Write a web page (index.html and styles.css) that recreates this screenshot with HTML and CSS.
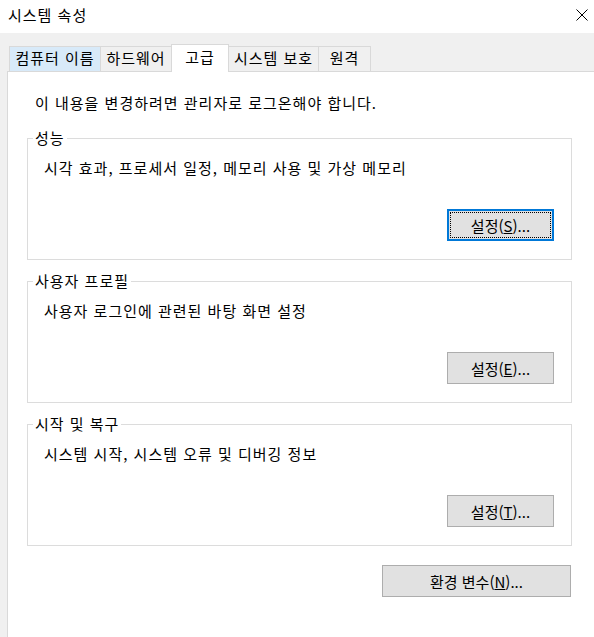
FILE: index.html
```html
<!DOCTYPE html>
<html lang="ko">
<head>
    <meta charset="UTF-8">
    <title>시스템 속성</title>
    <link rel="stylesheet" href="styles.css">
</head>
<body>
<div class="titlebar">
    <span class="title">시스템 속성</span>
    <svg class="close" width="12" height="12" viewBox="0 0 12 12">
        <path d="M0.5 0.5 L11.5 11.5 M11.5 0.5 L0.5 11.5" stroke="#000" stroke-width="1" fill="none"/>
    </svg>
</div>

<div class="tabs">
    <div class="tab tab-hover" style="width: 92px">컴퓨터 이름</div>
    <div class="tab" style="width: 72px">하드웨어</div>
    <div class="tab tab-active" style="width: 58px">고급</div>
    <div class="tab" style="width: 91px">시스템 보호</div>
    <div class="tab" style="width: 53px">원격</div>
</div>

<div class="panel">
    <p class="notice">이 내용을 변경하려면 관리자로 로그온해야 합니다.</p>

    <fieldset class="group">
        <legend>성능</legend>
        <p class="group-text">시각 효과, 프로세서 일정, 메모리 사용 및 가상 메모리</p>
        <button class="btn btn-focus"><span class="focus-ring">설정(<u>S</u>)...</span></button>
    </fieldset>

    <fieldset class="group">
        <legend>사용자 프로필</legend>
        <p class="group-text">사용자 로그인에 관련된 바탕 화면 설정</p>
        <button class="btn">설정(<u>E</u>)...</button>
    </fieldset>

    <fieldset class="group">
        <legend>시작 및 복구</legend>
        <p class="group-text">시스템 시작, 시스템 오류 및 디버깅 정보</p>
        <button class="btn">설정(<u>T</u>)...</button>
    </fieldset>

    <div class="footer">
        <button class="btn btn-wide">환경 변수(<u>N</u>)...</button>
    </div>
</div>
</body>
</html>
```

FILE: styles.css
```css
* {
    box-sizing: border-box;
}

html, body {
    height: 100%;
}

body {
    margin: 0;
    background-color: #f0f0f0;
    font-family: "Noto Sans CJK KR", "Noto Sans", sans-serif;
    font-size: 15px;
    line-height: 20px;
    letter-spacing: 1px;
    color: #000;
    display: flex;
    flex-direction: column;
    overflow: hidden;
}

/* 창 제목 표시줄 */
.titlebar {
    height: 33px;
    background-color: #fff;
    display: flex;
    align-items: center;
    justify-content: space-between;
    padding: 0 6px 0 8px;
}

.title {
    margin-top: -3px;
}

.close {
    margin-top: -3px;
}

/* 탭 */
.tabs {
    display: flex;
    align-items: flex-end;
    margin-top: 11px;
    padding-left: 9px;
    height: 27px;
    position: relative;
    z-index: 1;
}

.tab {
    height: 25px;
    border: 1px solid #d9d9d9;
    border-bottom: none;
    margin-left: -1px;
    text-align: center;
    line-height: 22px;
    white-space: nowrap;
}

.tab:first-child {
    margin-left: 0;
}

.tab-hover {
    background-color: #d8eaf9;
}

.tab-active {
    height: 28px;
    margin-bottom: -1px;
    background-color: #fff;
    line-height: 24px;
    position: relative;
    z-index: 2;
}

/* 탭 내용 */
.panel {
    flex: 1;
    margin-left: 7px;
    background-color: #fff;
    border-top: 1px solid #d9d9d9;
    border-left: 1px solid #d9d9d9;
    padding: 21px 22px 0 19px;
    display: flex;
    flex-direction: column;
}

.notice {
    margin: 0 0 0 8px;
}

.group {
    margin: 11px 0 0;
    padding: 0 17px 18px 16px;
    border: 1px solid #dcdcdc;
    display: flex;
    flex-direction: column;
    min-width: 0;
}

.panel .group:first-of-type {
    margin-top: 15px;
}

.group legend {
    margin-left: -11px;
    padding: 0 2px;
}

.group-text {
    margin: 10px 0 0;
}

.btn {
    align-self: flex-end;
    margin-top: 31px;
    width: 107px;
    height: 32px;
    background-color: #e1e1e1;
    border: 1px solid #adadad;
    border-radius: 0;
    font-family: inherit;
    font-size: 15px;
    letter-spacing: 0;
    color: #000;
    padding: 0;
}

.btn-focus {
    border: 2px solid #0078d7;
    padding: 1px;
}

.focus-ring {
    display: flex;
    align-items: center;
    justify-content: center;
    height: 100%;
    border: 1px dotted #000;
}

.footer {
    display: flex;
    justify-content: flex-end;
    padding-right: 1px;
}

.btn-wide {
    width: 189px;
    margin-top: 19px;
}
```
